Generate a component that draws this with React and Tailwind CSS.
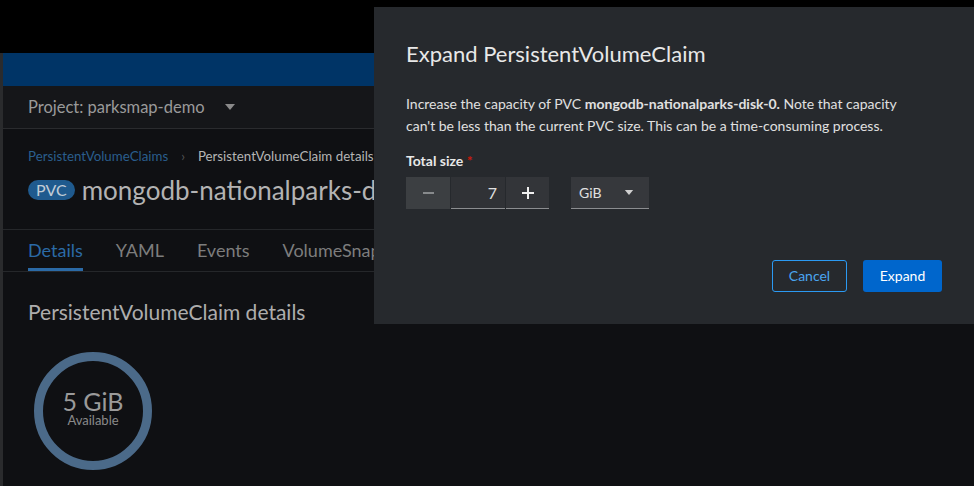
import React from "react";

function Caret({ className }) {
    return (
        <svg viewBox="0 0 10 6" className={className} fill="currentColor">
            <path d="M0 0h10L5 6z" />
        </svg>
    );
}

function Donut() {
    return (
        <div className="relative w-[120px] h-[120px] ml-[5px] mt-[27px]">
            <svg viewBox="0 0 120 120" className="absolute inset-0 w-full h-full">
                <circle cx="60" cy="60" r="54.5" fill="none" stroke="#4b6a89" strokeWidth="9" />
            </svg>
            <div className="absolute inset-0 flex flex-col items-center justify-center pb-[6px]">
                <span className="text-[25px] leading-[24px] text-[#9a9a9a]">5 GiB</span>
                <span className="text-[13px] leading-[14px] text-[#8a8a8a]">Available</span>
            </div>
        </div>
    );
}

function Page() {
    const tabs = ["Details", "YAML", "Events", "VolumeSnapshots"];
    return (
        <div className="flex flex-col flex-1 min-w-0">
            {/* Top bar */}
            <div className="h-[33px] bg-[#003466]" />

            {/* Project selector */}
            <div className="h-[43px] bg-[#151619] border-b border-[#2a2b2e] px-[25px] flex items-center">
                <span className="text-[16.5px] text-[#9a9a9a]">Project: parksmap-demo</span>
                <Caret className="w-[10px] h-[6px] ml-[20px] text-[#8a8a8a]" />
            </div>

            <div className="flex-1 bg-[#0f1013]">
                {/* Breadcrumb + title */}
                <div className="px-[25px] pt-[19px] pb-[24px] border-b border-[#25272a]">
                    <div className="flex items-center text-[13.3px] leading-[16px] whitespace-nowrap">
                        <span className="text-[#2a5e8d]">PersistentVolumeClaims</span>
                        <span className="mx-[13px] text-[#555]">›</span>
                        <span className="text-[#b5b5b5]">PersistentVolumeClaim details</span>
                    </div>
                    <div className="flex items-center mt-[11px] whitespace-nowrap">
                        <span className="bg-[#1f5a8e] text-[#c2ccd6] text-[16px] leading-[20px] px-[8px] rounded-full">PVC</span>
                        <span className="ml-[7px] text-[26px] leading-[30px] text-[#b3b3b3]">mongodb-nationalparks-disk-0</span>
                    </div>
                </div>

                {/* Tabs */}
                <div className="flex gap-[33px] px-[25px] border-b border-[#25272a] whitespace-nowrap">
                    {tabs.map((t, i) => (
                        <div
                            key={t}
                            className={
                                "h-[41px] pt-[2px] flex items-center text-[18px] border-b-[3px] " +
                                (i === 0 ? "text-[#2b6aa6] border-[#2b6aa6]" : "text-[#7d7d7d] border-transparent")
                            }
                        >
                            {t}
                        </div>
                    ))}
                </div>

                <div className="px-[25px] pt-[28px]">
                    <h2 className="text-[21px] leading-[24px] text-[#adadad]">PersistentVolumeClaim details</h2>
                    <Donut />
                </div>
            </div>
        </div>
    );
}

function ExpandModal() {
    return (
        <div className="absolute left-[374px] top-[7px] w-[600px] h-[317px] bg-[#26292d] px-[32px] pt-[32px] pb-[32px] flex flex-col">
            <h1 className="text-[22px] leading-[30px] text-[#e8e8e8]">Expand PersistentVolumeClaim</h1>
            <p className="mt-[24px] max-w-[500px] text-[14px] leading-[22px] text-[#e0e0e0]">
                Increase the capacity of PVC <b className="font-bold">mongodb-nationalparks-disk-0.</b> Note that capacity
                can't be less than the current PVC size. This can be a time-consuming process.
            </p>

            <div className="mt-[14px] text-[14px] leading-[20px] font-bold text-[#e8e8e8]">
                Total size <span className="text-[#c9190b]">*</span>
            </div>

            <div className="flex mt-[6px] h-[32px]">
                <button className="w-[44px] h-full bg-[#3c3f42] flex items-center justify-center text-[#8f9193]">
                    <svg viewBox="0 0 12 2" className="w-[11px] h-[2px]" fill="currentColor"><rect width="12" height="2" /></svg>
                </button>
                <div className="w-[54px] ml-[1px] h-full bg-[#303236] border-b border-[#8b8d90] flex items-center justify-end pr-[8px] text-[16px] text-[#e0e0e0]">7</div>
                <button className="w-[43px] ml-[1px] h-full bg-[#333539] border-b border-[#8b8d90] flex items-center justify-center text-[#f0f0f0]">
                    <svg viewBox="0 0 12 12" className="w-[12px] h-[12px]" fill="currentColor"><rect x="5" width="2" height="12" /><rect y="5" width="12" height="2" /></svg>
                </button>
                <div className="w-[78px] ml-[22px] h-full bg-[#36383c] border-b border-[#8b8d90] flex items-center pl-[8px] text-[14px] text-[#e0e0e0]">
                    GiB
                    <Caret className="w-[10px] h-[5px] ml-[23px] text-[#d0d0d0]" />
                </div>
            </div>

            <div className="mt-auto flex justify-end gap-[16px]">
                <button className="w-[75px] h-[32px] pb-[2px] border border-[#2b9af3] rounded-[3px] text-[14px] text-[#4aa5f0]">Cancel</button>
                <button className="w-[79px] h-[32px] pb-[2px] bg-[#0066cc] rounded-[3px] text-[14px] text-white">Expand</button>
            </div>
        </div>
    );
}

export default function App() {
    return (
        <div
            className="relative w-[974px] h-[486px] overflow-hidden bg-black flex flex-col"
            style={{ fontFamily: "Lato, 'Liberation Sans', sans-serif" }}
        >
            <div className="h-[53px] shrink-0" />
            <div className="flex flex-1 min-h-0">
                <div className="w-[3px] bg-[#2a2b2d]" />
                <Page />
            </div>
            <ExpandModal />
        </div>
    );
}
